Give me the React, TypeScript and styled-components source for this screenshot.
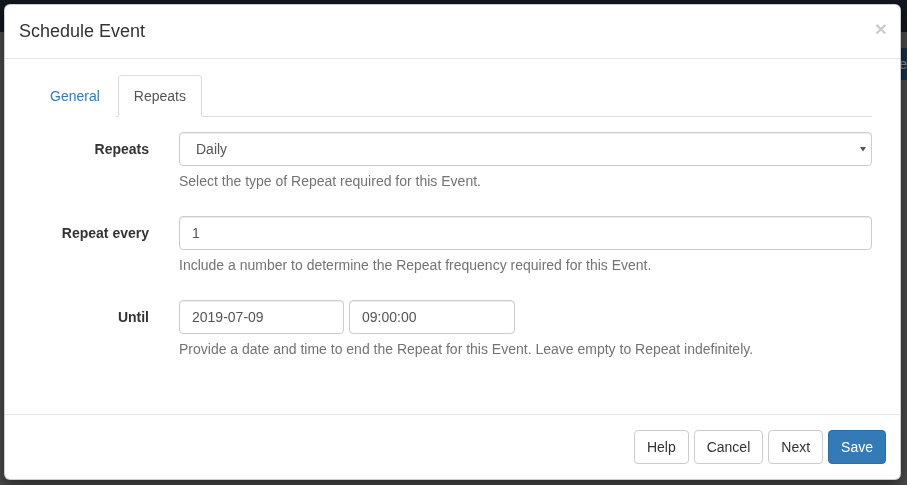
import React from "react";
import styled, { createGlobalStyle } from "styled-components";

const GlobalStyle = createGlobalStyle`
  html, body { margin: 0; padding: 0; }
  body {
    font-family: "Liberation Sans", Arial, Helvetica, sans-serif;
    font-size: 14px;
    line-height: 20px;
    color: #333;
    background: #4b4b4b;
  }
  * { box-sizing: border-box; }
`;

const Page = styled.div`
  position: relative;
  width: 100vw;
  height: 100vh;
  overflow: hidden;
  background: #4b4b4b;
`;

const Navbar = styled.div`
  height: 32px;
  background: #12171e;
`;

const PageToolbar = styled.div`
  display: flex;
  justify-content: flex-end;
  padding-top: 16px;
`;

const PageButton = styled.div`
  height: 32px;
  padding: 6px 12px;
  margin-right: -12px;
  background: #173049;
  color: #8a929a;
  font-size: 14px;
  line-height: 20px;
  border-radius: 3px;
`;

const Modal = styled.div`
  position: fixed;
  top: 4px;
  left: 4px;
  width: 897px;
  background: #fff;
  border: 1px solid rgba(0, 0, 0, 0.2);
  border-radius: 6px;
  box-shadow: 0 5px 15px rgba(0, 0, 0, 0.5);
  display: flex;
  flex-direction: column;
`;

const Header = styled.div`
  display: flex;
  align-items: flex-start;
  justify-content: space-between;
  padding: 14px 14px 15px 14px;
  border-bottom: 1px solid #e5e5e5;
`;

const Title = styled.h4`
  margin: 0;
  font-size: 18px;
  line-height: 24px;
  font-weight: 500;
  color: #333;
`;

const Close = styled.button`
  border: 0;
  background: transparent;
  padding: 0;
  margin-top: -1px;
  margin-right: -1px;
  font-family: "Liberation Sans", Arial, sans-serif;
  font-size: 21px;
  line-height: 1;
  font-weight: 700;
  color: #000;
  opacity: 0.2;
  cursor: pointer;
`;

const Body = styled.div`
  padding: 16px 28px 30px 29px;
`;

const Tabs = styled.ul`
  display: flex;
  margin: 0;
  padding: 0;
  list-style: none;
  border-bottom: 1px solid #ddd;
`;

const Tab = styled.li<{ $active?: boolean }>`
  margin-bottom: -1px;
  margin-right: 2px;
  padding: 10px 15px;
  line-height: 20px;
  border: 1px solid ${(p) => (p.$active ? "#ddd" : "transparent")};
  border-bottom-color: ${(p) => (p.$active ? "#fff" : "transparent")};
  border-radius: 4px 4px 0 0;
  background: #fff;
  color: ${(p) => (p.$active ? "#555" : "#337ab7")};
  cursor: pointer;
`;

const TabContent = styled.div`
  padding-top: 15px;
`;

const FormGroup = styled.div`
  display: grid;
  grid-template-columns: 145px 1fr;
  margin: 0 -15px 15px -15px;
`;

const Label = styled.label`
  padding: 7px 15px 0 15px;
  text-align: right;
  font-weight: 700;
  color: #333;
  line-height: 20px;
`;

const Field = styled.div`
  padding: 0 15px;
  display: flex;
  flex-direction: column;
`;

const inputBase = `
  height: 34px;
  padding: 6px 12px;
  font-size: 14px;
  line-height: 20px;
  color: #555;
  background: #fff;
  border: 1px solid #ccc;
  border-radius: 4px;
  box-shadow: inset 0 1px 1px rgba(0, 0, 0, 0.075);
  font-family: "Liberation Sans", Arial, sans-serif;
`;

const Select = styled.div`
  ${inputBase}
  display: flex;
  align-items: center;
  justify-content: space-between;
  padding-left: 16px;
  padding-right: 5px;
`;

const Input = styled.div<{ $width?: number }>`
  ${inputBase}
  width: ${(p) => (p.$width ? `${p.$width}px` : "100%")};
`;

const InputRow = styled.div`
  display: flex;
  gap: 5px;
`;

const Help = styled.p`
  margin: 5px 0 10px 0;
  color: #737373;
  line-height: 20px;
`;

const Footer = styled.div`
  display: flex;
  justify-content: flex-end;
  gap: 5px;
  padding: 15px 14px 15px 15px;
  border-top: 1px solid #e5e5e5;
`;

const Button = styled.button<{ $primary?: boolean }>`
  height: 34px;
  padding: 6px 12px;
  font-family: "Liberation Sans", Arial, sans-serif;
  font-size: 14px;
  line-height: 20px;
  border-radius: 4px;
  border: 1px solid ${(p) => (p.$primary ? "#2e6da4" : "#ccc")};
  background: ${(p) => (p.$primary ? "#337ab7" : "#fff")};
  color: ${(p) => (p.$primary ? "#fff" : "#333")};
  cursor: pointer;
`;

const Caret = () => (
  <svg width="6" height="6" viewBox="0 0 6 6">
    <path d="M0 1 H6 L3 5.5 Z" fill="#555" />
  </svg>
);

export default function App() {
  return (
    <>
      <GlobalStyle />
      <Page>
        <Navbar />
        <PageToolbar>
          <PageButton>Save</PageButton>
        </PageToolbar>
        <Modal>
          <Header>
            <Title>Schedule Event</Title>
            <Close aria-label="Close">×</Close>
          </Header>
          <Body>
            <Tabs>
              <Tab>General</Tab>
              <Tab $active>Repeats</Tab>
            </Tabs>
            <TabContent>
              <FormGroup>
                <Label>Repeats</Label>
                <Field>
                  <Select>
                    <span>Daily</span>
                    <Caret />
                  </Select>
                  <Help>Select the type of Repeat required for this Event.</Help>
                </Field>
              </FormGroup>
              <FormGroup>
                <Label>Repeat every</Label>
                <Field>
                  <Input>1</Input>
                  <Help>Include a number to determine the Repeat frequency required for this Event.</Help>
                </Field>
              </FormGroup>
              <FormGroup>
                <Label>Until</Label>
                <Field>
                  <InputRow>
                    <Input $width={165}>2019-07-09</Input>
                    <Input $width={166}>09:00:00</Input>
                  </InputRow>
                  <Help>Provide a date and time to end the Repeat for this Event. Leave empty to Repeat indefinitely.</Help>
                </Field>
              </FormGroup>
            </TabContent>
          </Body>
          <Footer>
            <Button>Help</Button>
            <Button>Cancel</Button>
            <Button>Next</Button>
            <Button $primary>Save</Button>
          </Footer>
        </Modal>
      </Page>
    </>
  );
}
